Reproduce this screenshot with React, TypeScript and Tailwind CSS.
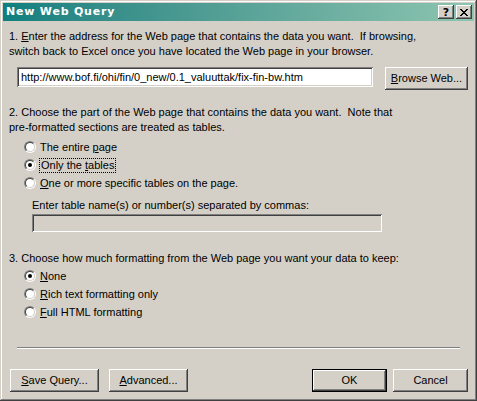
import React from "react"

const raised =
  "shadow-[inset_-1px_-1px_#404040,inset_1px_1px_#ffffff,inset_-2px_-2px_#808080,inset_2px_2px_#d4d0c8]"
const sunken =
  "shadow-[inset_1px_1px_#808080,inset_-1px_-1px_#ffffff,inset_2px_2px_#404040,inset_-2px_-2px_#d4d0c8]"

function Radio({ checked = false }: { checked?: boolean }) {
  return (
    <span className="block h-[12px] w-[12px] shrink-0 rounded-full border border-t-[#808080] border-l-[#808080] border-r-white border-b-white">
      <span className="flex h-full w-full items-center justify-center rounded-full border border-t-[#404040] border-l-[#404040] border-r-[#d4d0c8] border-b-[#d4d0c8] bg-white">
        {checked && <span className="block h-[4px] w-[4px] rounded-full bg-black" />}
      </span>
    </span>
  )
}

function Option({
  checked,
  focused,
  children,
}: {
  checked?: boolean
  focused?: boolean
  children: React.ReactNode
}) {
  return (
    <div className="flex h-[18px] items-center pl-[15px]">
      <Radio checked={checked} />
      <span
        className={
          focused
            ? "ml-[3px] border border-dotted border-black px-[1px] leading-[13px]"
            : "ml-[4px] leading-[13px]"
        }
      >
        {children}
      </span>
    </div>
  )
}

function Button({
  children,
  width,
  isDefault,
}: {
  children: React.ReactNode
  width: string
  isDefault?: boolean
}) {
  if (isDefault) {
    return (
      <div className={`h-[23px] border border-black ${width}`}>
        <div className={`flex h-full w-full items-center justify-center ${raised}`}>{children}</div>
      </div>
    )
  }
  return (
    <div className={`flex h-[23px] items-center justify-center ${width} ${raised}`}>{children}</div>
  )
}

function TitleButton({ children }: { children: React.ReactNode }) {
  return (
    <div className={`flex h-[14px] w-[16px] items-center justify-center bg-[#d4d0c8] ${raised}`}>
      {children}
    </div>
  )
}

export default function App() {
  return (
    <div
      className="flex h-[401px] w-[477px] flex-col bg-[#d4d0c8] p-[3px] text-[11px] text-black shadow-[inset_-1px_-1px_#404040,inset_1px_1px_#d4d0c8,inset_-2px_-2px_#808080,inset_2px_2px_#ffffff]"
      style={{ fontFamily: '"Liberation Sans", Arial, sans-serif' }}
    >
      {/* Title bar */}
      <div className="flex h-[18px] items-center bg-gradient-to-r from-[#0c7f7f] to-[#8dc5b0] pl-[3px] pr-[2px]">
        <span
          className="flex-1 text-[11px] font-bold tracking-[0.8px] text-white"
          style={{ fontFamily: '"DejaVu Sans", Verdana, sans-serif' }}
        >
          New Web Query
        </span>
        <TitleButton>
          <span className="text-[11px] font-bold leading-none" style={{ fontFamily: '"DejaVu Sans", sans-serif' }}>
            ?
          </span>
        </TitleButton>
        <div className="w-[2px]" />
        <TitleButton>
          <svg width="8" height="7" viewBox="0 0 8 7" shapeRendering="crispEdges">
            <path d="M0 0h2v1H0zM6 0h2v1H6zM1 1h2v1H1zM5 1h2v1H5zM2 2h4v1H2zM3 3h2v1H3zM2 4h4v1H2zM1 5h2v1H1zM5 5h2v1H5zM0 6h2v1H0zM6 6h2v1H6z" fill="#000" />
          </svg>
        </TitleButton>
      </div>

      {/* Body */}
      <div className="flex flex-1 flex-col pl-[6px] pr-[6px] leading-[15px]">
        <p className="mt-[8px]">
          1. <u>E</u>nter the address for the Web page that contains the data you want.&nbsp; If browsing,
          <br />
          switch back to Excel once you have located the Web page in your browser.
        </p>

        <div className="mt-[8px] flex items-start pl-[8px]">
          <div className={`flex h-[20px] w-[356px] items-center bg-white pl-[4px] ${sunken}`}>
            http://www.bof.fi/ohi/fin/0_new/0.1_valuuttak/fix-fin-bw.htm
          </div>
          <div className="ml-[12px]">
            <Button width="w-[83px]">
              <span>
                <u>B</u>rowse Web...
              </span>
            </Button>
          </div>
        </div>

        <p className="mt-[15px]">
          2. Choose the part of the Web page that contains the data you want.&nbsp; Note that
          <br />
          pre-formatted sections are treated as tables.
        </p>

        <div className="mt-[3px] flex flex-col">
          <Option>
            The entire <u>p</u>age
          </Option>
          <Option checked focused>
            Only the <u>t</u>ables
          </Option>
          <Option>
            <u>O</u>ne or more specific tables on the page.
          </Option>
        </div>

        <div className="mt-[6px] pl-[23px]">
          <p>Enter table name(s) or number(s) separated by commas:</p>
          <div className={`mt-[1px] h-[18px] w-[350px] bg-[#d4d0c8] ${sunken}`} />
        </div>

        <p className="mt-[19px]">3. Choose how much formatting from the Web page you want your data to keep:</p>

        <div className="mt-[1px] flex flex-col">
          <Option checked>
            <u>N</u>one
          </Option>
          <Option>
            <u>R</u>ich text formatting only
          </Option>
          <Option>
            <u>F</u>ull HTML formatting
          </Option>
        </div>

        <div className="mx-[8px] mt-[26px] h-[2px] border-t border-b border-t-[#808080] border-b-white" />

        <div className="mt-[20px] flex items-center pl-[1px]">
          <Button width="w-[89px]">
            <span>
              <u>S</u>ave Query...
            </span>
          </Button>
          <div className="ml-[10px]">
            <Button width="w-[79px]">
              <span>
                <u>A</u>dvanced...
              </span>
            </Button>
          </div>
          <div className="flex-1" />
          <Button width="w-[75px]" isDefault>
            OK
          </Button>
          <div className="ml-[6px]">
            <Button width="w-[75px]">Cancel</Button>
          </div>
        </div>
      </div>
    </div>
  )
}
